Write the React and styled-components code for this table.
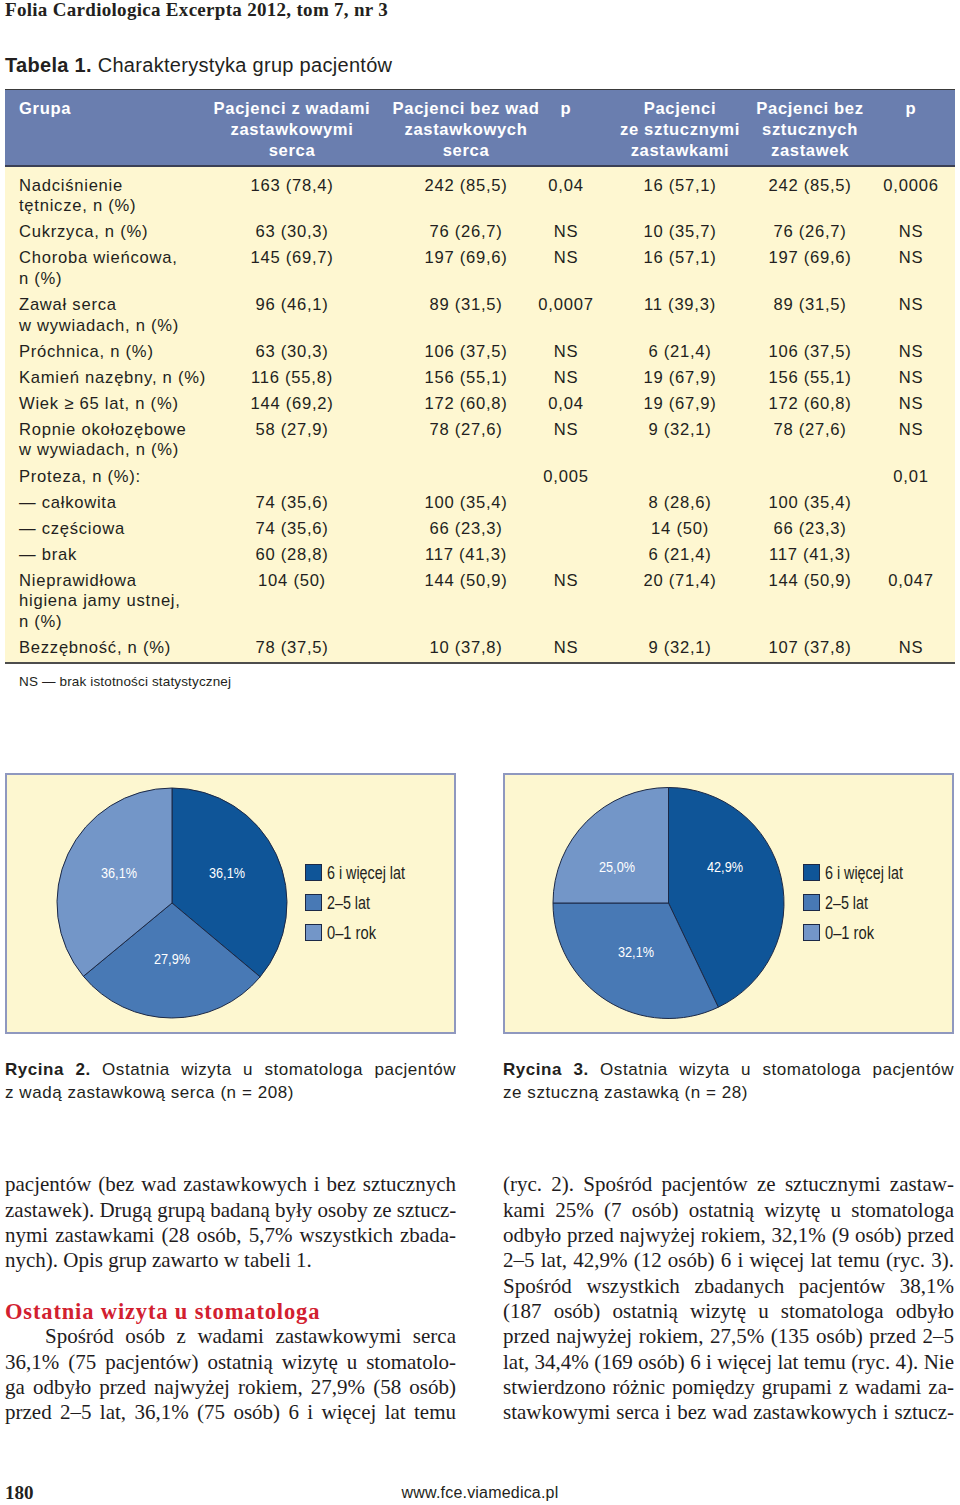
import React from "react";
import styled, { createGlobalStyle } from "styled-components";

// page-wide reset
const GlobalStyle = createGlobalStyle`
  html, body {
    margin: 0;
    padding: 0;
    background: #fff;
  }
  body {
    color: #231f20;
  }
`;

const COLS = "172px 230px 118px 82px 146px 114px 88px";
const SANS = `"Liberation Sans", Arial, sans-serif`;
const SERIF = `"Liberation Serif", "Times New Roman", serif`;

const Page = styled.div`
  width: 960px;
  height: 1505px;
  box-sizing: border-box;
  padding: 0 5px 0 5px;
  display: flex;
  flex-direction: column;
  overflow: hidden;
`;

const RunningHead = styled.div`
  font: bold 19px/20px ${SERIF};
  letter-spacing: 0.3px;
`;

const TableTitle = styled.div`
  margin-top: 34px;
  font: 20px/22px ${SANS};
  letter-spacing: 0.3px;
`;

const Table = styled.div`
  margin-top: 13px;
  font-family: ${SANS};
  font-size: 16.6px;
  letter-spacing: 0.75px;
  border-top: 1px solid #3a3a3a;
  border-bottom: 2px solid #4d4d4d;
  background: #fef7d1;
`;

const HeadRow = styled.div`
  display: grid;
  grid-template-columns: ${COLS};
  background: #6a7eaf;
  color: #fff;
  font-weight: bold;
  letter-spacing: 0.65px;
  padding: 7.5px 0 4.5px;
  line-height: 21px;
  border-bottom: 2px solid #3b4055;
`;

const Body = styled.div`
  padding: 6px 0 1px;
`;

const Row = styled.div`
  display: grid;
  grid-template-columns: ${COLS};
  padding: 2.8px 0;
  line-height: 20.5px;
`;

const LabelCell = styled.div`
  padding-left: 14px;
  white-space: nowrap;
`;

const Cell = styled.div`
  display: flex;
  justify-content: center;
  white-space: nowrap;
  text-align: center;
`;

const Footnote = styled.div`
  margin-top: 10px;
  padding-left: 14px;
  font: 13.5px/16px ${SANS};
  letter-spacing: 0.15px;
`;

const Columns = styled.div`
  display: grid;
  grid-template-columns: 451px 451px;
  column-gap: 47px;
  margin-top: ${(p) => p.$top}px;
`;

const FigureBox = styled.div`
  height: 261px;
  box-sizing: border-box;
  border: 2px solid #8f98bf;
  background: #fdf7d0;
`;

const Caption = styled.div`
  font: 17px/23px ${SANS};
  letter-spacing: 0.55px;
`;

const CaptionLine = styled.div`
  text-align: justify;
  text-align-last: ${(p) => (p.$last ? "left" : "justify")};
`;

const TextColumn = styled.div`
  font: 21px/25.33px ${SERIF};
  color: #1f1c1d;
`;

const Line = styled.div`
  white-space: nowrap;
  text-align: justify;
  text-align-last: ${(p) => (p.$last ? "left" : "justify")};
  text-indent: ${(p) => (p.$indent ? "40px" : "0")};
`;

const Heading = styled.div`
  margin-top: 25.33px;
  font-size: 22.5px;
  font-weight: bold;
  letter-spacing: 0.85px;
  color: #d2202f;
`;

const Footer = styled.div`
  margin-top: 56px;
  display: grid;
  grid-template-columns: 1fr auto 1fr;
  align-items: center;
  line-height: 20px;
`;

const PageNo = styled.span`
  font: bold 19px ${SERIF};
`;

const Url = styled.span`
  font: 16px ${SANS};
  letter-spacing: 0.2px;
`;

const heads = [
  ["Pacjenci z wadami", "zastawkowymi", "serca"],
  ["Pacjenci bez wad", "zastawkowych", "serca"],
  ["p"],
  ["Pacjenci", "ze sztucznymi", "zastawkami"],
  ["Pacjenci bez", "sztucznych", "zastawek"],
  ["p"],
];

const rows = [
  { label: ["Nadciśnienie", "tętnicze, n (%)"], v: ["163 (78,4)", "242 (85,5)", "0,04", "16 (57,1)", "242 (85,5)", "0,0006"] },
  { label: ["Cukrzyca, n (%)"], v: ["63 (30,3)", "76 (26,7)", "NS", "10 (35,7)", "76 (26,7)", "NS"] },
  { label: ["Choroba wieńcowa,", "n (%)"], v: ["145 (69,7)", "197 (69,6)", "NS", "16 (57,1)", "197 (69,6)", "NS"] },
  { label: ["Zawał serca", "w wywiadach, n (%)"], v: ["96 (46,1)", "89 (31,5)", "0,0007", "11 (39,3)", "89 (31,5)", "NS"] },
  { label: ["Próchnica, n (%)"], v: ["63 (30,3)", "106 (37,5)", "NS", "6 (21,4)", "106 (37,5)", "NS"] },
  { label: ["Kamień nazębny, n (%)"], v: ["116 (55,8)", "156 (55,1)", "NS", "19 (67,9)", "156 (55,1)", "NS"] },
  { label: ["Wiek ≥ 65 lat, n (%)"], v: ["144 (69,2)", "172 (60,8)", "0,04", "19 (67,9)", "172 (60,8)", "NS"] },
  { label: ["Ropnie okołozębowe", "w wywiadach, n (%)"], v: ["58 (27,9)", "78 (27,6)", "NS", "9 (32,1)", "78 (27,6)", "NS"] },
  { label: ["Proteza, n (%):"], v: ["", "", "0,005", "", "", "0,01"] },
  { label: ["— całkowita"], v: ["74 (35,6)", "100 (35,4)", "", "8 (28,6)", "100 (35,4)", ""] },
  { label: ["— częściowa"], v: ["74 (35,6)", "66 (23,3)", "", "14 (50)", "66 (23,3)", ""] },
  { label: ["— brak"], v: ["60 (28,8)", "117 (41,3)", "", "6 (21,4)", "117 (41,3)", ""] },
  { label: ["Nieprawidłowa", "higiena jamy ustnej,", "n (%)"], v: ["104 (50)", "144 (50,9)", "NS", "20 (71,4)", "144 (50,9)", "0,047"] },
  { label: ["Bezzębność, n (%)"], v: ["78 (37,5)", "10 (37,8)", "NS", "9 (32,1)", "107 (37,8)", "NS"] },
];

const Lines = ({ items }) =>
  items.map((t, i) => (
    <React.Fragment key={i}>
      {i > 0 && <br />}
      {t}
    </React.Fragment>
  ));

// pie chart
const COLORS = { dark: "#0f5598", mid: "#4879b5", light: "#7396c8" };
const OUTLINE = "#1c2946";
const NARROW = `"Liberation Sans Narrow", "Liberation Sans", sans-serif`;

const point = (cx, cy, r, a) => {
  const rad = (a * Math.PI) / 180;
  return [cx + r * Math.sin(rad), cy - r * Math.cos(rad)];
};

const slicePath = (cx, cy, r, a0, a1) => {
  const [x0, y0] = point(cx, cy, r, a0);
  const [x1, y1] = point(cx, cy, r, a1);
  const large = a1 - a0 > 180 ? 1 : 0;
  return `M${cx},${cy} L${x0},${y0} A${r},${r} 0 ${large} 1 ${x1},${y1} Z`;
};

const legend = [
  { key: "dark", text: "6 i więcej lat", w: 78 },
  { key: "mid", text: "2–5 lat", w: 43 },
  { key: "light", text: "0–1 rok", w: 49 },
];

const PieChart = ({ cx, r, slices }) => {
  let start = 0;
  return (
    <svg width="447" height="257" viewBox="0 0 447 257">
      {slices.map((s) => {
        const end = start + s.value * 3.6;
        const d = slicePath(cx, 128, r, start, end);
        start = end;
        return <path key={s.key} d={d} fill={COLORS[s.key]} stroke={OUTLINE} strokeWidth="1" />;
      })}
      {slices.map((s) => (
        <text
          key={s.key + "l"}
          x={s.lx}
          y={s.ly + 5}
          textAnchor="middle"
          fill="#fff"
          fontFamily={NARROW}
          fontSize="15"
          textLength="36"
          lengthAdjust="spacingAndGlyphs"
        >
          {s.label}
        </text>
      ))}
      {legend.map((l, i) => (
        <g key={l.key}>
          <rect x="298.5" y={89.5 + i * 30} width="16" height="16" fill={COLORS[l.key]} stroke={OUTLINE} strokeWidth="1" />
          <text
            x="320"
            y={103.5 + i * 30}
            fill="#231f20"
            fontFamily={NARROW}
            fontSize="17.5"
            textLength={l.w}
            lengthAdjust="spacingAndGlyphs"
          >
            {l.text}
          </text>
        </g>
      ))}
    </svg>
  );
};

const chart1 = [
  { key: "dark", value: 36.1, label: "36,1%", lx: 220, ly: 98 },
  { key: "mid", value: 27.9, label: "27,9%", lx: 165, ly: 184 },
  { key: "light", value: 36.0, label: "36,1%", lx: 112, ly: 98 },
];

const chart2 = [
  { key: "dark", value: 42.9, label: "42,9%", lx: 220, ly: 92 },
  { key: "mid", value: 32.1, label: "32,1%", lx: 131, ly: 177 },
  { key: "light", value: 25.0, label: "25,0%", lx: 112, ly: 92 },
];

export default function App() {
  return (
    <Page>
      <GlobalStyle />
      <RunningHead>Folia Cardiologica Excerpta 2012, tom 7, nr 3</RunningHead>
      <TableTitle>
        <b>Tabela 1.</b> Charakterystyka grup pacjentów
      </TableTitle>

      <Table>
        <HeadRow>
          <LabelCell>Grupa</LabelCell>
          {heads.map((h, i) => (
            <Cell key={i}>
              <span>
                <Lines items={h} />
              </span>
            </Cell>
          ))}
        </HeadRow>
        <Body>
          {rows.map((r, i) => (
            <Row key={i}>
              <LabelCell>
                <Lines items={r.label} />
              </LabelCell>
              {r.v.map((v, j) => (
                <Cell key={j}>{v}</Cell>
              ))}
            </Row>
          ))}
        </Body>
      </Table>
      <Footnote>NS — brak istotności statystycznej</Footnote>

      <Columns $top={83}>
        <FigureBox>
          <PieChart cx={165} r={115} slices={chart1} />
        </FigureBox>
        <FigureBox>
          <PieChart cx={163.5} r={115.5} slices={chart2} />
        </FigureBox>
      </Columns>

      <Columns $top={24}>
        <Caption>
          <CaptionLine>
            <b>Rycina 2.</b> Ostatnia wizyta u stomatologa pacjentów
          </CaptionLine>
          <CaptionLine $last>z wadą zastawkową serca (n = 208)</CaptionLine>
        </Caption>
        <Caption>
          <CaptionLine>
            <b>Rycina 3.</b> Ostatnia wizyta u stomatologa pacjentów
          </CaptionLine>
          <CaptionLine $last>ze sztuczną zastawką (n = 28)</CaptionLine>
        </Caption>
      </Columns>

      <Columns $top={68}>
        <TextColumn>
          <Line>pacjentów (bez wad zastawkowych i bez sztucznych</Line>
          <Line>zastawek). Drugą grupą badaną były osoby ze sztucz-</Line>
          <Line>nymi zastawkami (28 osób, 5,7% wszystkich zbada-</Line>
          <Line $last>nych). Opis grup zawarto w tabeli 1.</Line>
          <Heading>Ostatnia wizyta u stomatologa</Heading>
          <Line $indent>Spośród osób z wadami zastawkowymi serca</Line>
          <Line>36,1% (75 pacjentów) ostatnią wizytę u stomatolo-</Line>
          <Line>ga odbyło przed najwyżej rokiem, 27,9% (58 osób)</Line>
          <Line>przed 2–5 lat, 36,1% (75 osób) 6 i więcej lat temu</Line>
        </TextColumn>
        <TextColumn>
          <Line>(ryc. 2). Spośród pacjentów ze sztucznymi zastaw-</Line>
          <Line>kami 25% (7 osób) ostatnią wizytę u stomatologa</Line>
          <Line>odbyło przed najwyżej rokiem, 32,1% (9 osób) przed</Line>
          <Line>2–5 lat, 42,9% (12 osób) 6 i więcej lat temu (ryc. 3).</Line>
          <Line>Spośród wszystkich zbadanych pacjentów 38,1%</Line>
          <Line>(187 osób) ostatnią wizytę u stomatologa odbyło</Line>
          <Line>przed najwyżej rokiem, 27,5% (135 osób) przed 2–5</Line>
          <Line>lat, 34,4% (169 osób) 6 i więcej lat temu (ryc. 4). Nie</Line>
          <Line>stwierdzono różnic pomiędzy grupami z wadami za-</Line>
          <Line>stawkowymi serca i bez wad zastawkowych i sztucz-</Line>
        </TextColumn>
      </Columns>

      <Footer>
        <PageNo>180</PageNo>
        <Url>www.fce.viamedica.pl</Url>
        <span />
      </Footer>
    </Page>
  );
}
